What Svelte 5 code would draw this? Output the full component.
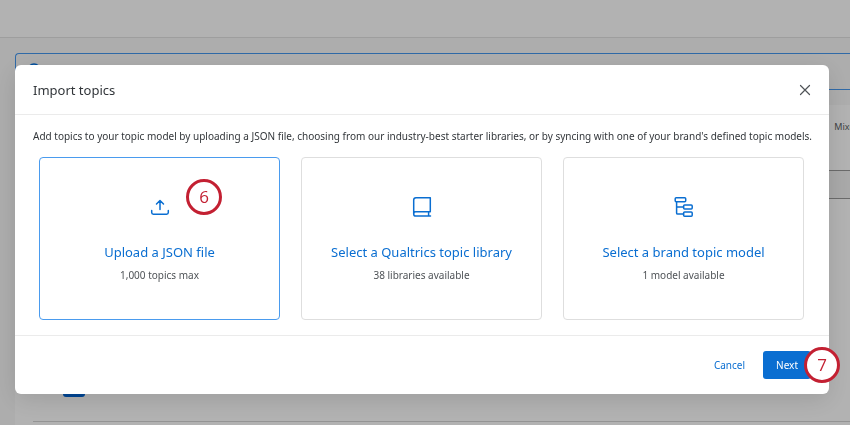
<script>
  let selected = $state("json");
  let open = $state(true);

  const options = [
    { id: "json", title: "Upload a JSON file", note: "1,000 topics max", step: 6 },
    { id: "library", title: "Select a Qualtrics topic library", note: "38 libraries available" },
    { id: "brand", title: "Select a brand topic model", note: "1 model available" },
  ];

  function close() {
    open = false;
  }
</script>

<div class="page">
  <div class="topbar"></div>
  <main class="content">
    <div class="notice">
      <svg width="14" height="14" viewBox="0 0 14 14" aria-hidden="true">
        <circle cx="7" cy="7" r="6" />
      </svg>
    </div>
    <div class="panel">
      <div class="summary">
        <span class="square"></span>
        <span>Mixed</span>
      </div>
      <div class="strip"></div>
      <div class="rows">
        <span class="chip"></span>
      </div>
    </div>
  </main>
</div>

{#if open}
  <div class="overlay">
    <div class="modal" role="dialog" aria-modal="true" aria-labelledby="modal-title">
      <header>
        <h1 id="modal-title">Import topics</h1>
        <button class="close" aria-label="Close" onclick={close}>
          <svg width="12" height="12" viewBox="0 0 12 12">
            <path d="M1.5 1.5l9 9M10.5 1.5l-9 9" />
          </svg>
        </button>
      </header>

      <div class="body">
        <p>Add topics to your topic model by uploading a JSON file, choosing from our industry-best starter libraries, or by syncing with one of your brand's defined topic models.</p>
        <div class="cards">
          {#each options as option}
            <button
              class="card"
              class:selected={selected === option.id}
              aria-pressed={selected === option.id}
              onclick={() => { selected = option.id }}
            >
              <svg class="icon" width="22" height="22" viewBox="0 0 22 22" aria-hidden="true">
                {#if option.id === "json"}
                  <path d="M11 13.5V4.5M7.5 8L11 4.5L14.5 8M2.7 14.5V16.5Q2.7 18.2 4.4 18.2H17.6Q19.3 18.2 19.3 16.5V14.5" />
                {:else if option.id === "library"}
                  <path d="M19.3 15.8V1.7H5Q2.7 1.7 2.7 4V18Q2.7 20.1 4.8 20.1H19.5M19.3 15.8H4.8Q2.7 15.8 2.7 18M17.6 15.8V20" />
                {:else}
                  <rect x="2.2" y="1.7" width="10.5" height="4" rx="1" />
                  <rect x="10.6" y="9" width="8.6" height="4" rx="1" />
                  <rect x="10.6" y="16" width="8.6" height="4.2" rx="1" />
                  <path d="M3.6 5.7V17Q3.6 18.1 4.7 18.1H10.6M3.6 11H10.6" />
                {/if}
              </svg>
              <span class="title">{option.title}</span>
              <span class="note">{option.note}</span>
              {#if option.step}
                <span class="step on-card">{option.step}</span>
              {/if}
            </button>
          {/each}
        </div>
      </div>

      <footer>
        <button class="cancel" onclick={close}>Cancel</button>
        <button class="next">Next</button>
        <span class="step on-footer">7</span>
      </footer>
    </div>
  </div>
{/if}

<style>
  :global(body) {
    background: #f8f8f8;
    color: #32363a;
    font-family: "Noto Sans", "Liberation Sans", sans-serif;
    font-size: 10px;
    line-height: 16px;
  }

  button {
    padding: 0;
    border: 0;
    background: none;
    color: inherit;
    font: inherit;
    cursor: pointer;
  }

  svg {
    fill: none;
    stroke: currentColor;
    stroke-width: 1.5;
    stroke-linecap: round;
    stroke-linejoin: round;
  }

  .page {
    height: 100vh;
    overflow: hidden;
    display: flex;
    flex-direction: column;
  }

  .topbar {
    flex: none;
    height: 37px;
    background: #fff;
    border-bottom: 1px solid #e2e2e2;
  }

  .content {
    flex: 1;
    display: flex;
    flex-direction: column;
    padding: 15px 0 0 15px;
  }

  .notice {
    flex: none;
    box-sizing: border-box;
    height: 37px;
    padding: 9px 11px;
    border: 1px solid #4598f0;
    border-right: 0;
    border-radius: 4px 0 0 4px;
    color: #0070e0;
  }

  .panel {
    flex: 1;
    margin-top: 15px;
    background: #fff;
  }

  .summary {
    display: flex;
    align-items: center;
    justify-content: flex-end;
    gap: 5px;
    height: 36px;
    margin-right: -10px;
    padding: 4px 0 25px;
    color: #5a5e62;
    font-size: 9px;
  }

  .square {
    width: 5px;
    height: 6px;
    background: #666;
  }

  .strip {
    height: 27px;
    background: #f2f2f2;
    border-top: 1px solid #999;
    border-bottom: 1px solid #999;
  }

  .rows {
    display: flex;
    align-items: flex-end;
    height: 223px;
    margin-left: 18px;
    padding-left: 30px;
    box-sizing: border-box;
    border-bottom: 1px solid #d4d4d4;
  }

  .chip {
    width: 22px;
    height: 16px;
    margin-bottom: 24px;
    border-radius: 3px;
    background: #0064d2;
  }

  .overlay {
    position: fixed;
    inset: 0;
    display: flex;
    align-items: flex-start;
    padding: 65px 21px 0 15px;
    background: rgba(0, 0, 0, 0.3);
  }

  .modal {
    flex: 1;
    min-width: 0;
    border-radius: 6px;
    background: #fff;
    box-shadow: 0 6px 24px rgba(0, 0, 0, 0.12);
  }

  header {
    display: flex;
    align-items: center;
    justify-content: space-between;
    height: 49px;
    padding: 0 18px;
    border-bottom: 1px solid #ebebeb;
  }

  h1 {
    margin: 0;
    font-size: 13px;
    font-weight: 400;
  }

  .close {
    display: flex;
    color: #4f5357;
  }

  .close svg {
    stroke-width: 1.2;
  }

  .body {
    padding: 13px 18px 15px;
  }

  p {
    margin: 0 0 13px;
    white-space: nowrap;
  }

  .cards {
    display: grid;
    grid-template-columns: repeat(3, 1fr);
    gap: 21px;
    padding: 0 7px 0 6px;
  }

  .card {
    position: relative;
    display: flex;
    flex-direction: column;
    align-items: center;
    height: 163px;
    padding-top: 38px;
    border: 1px solid #dedede;
    border-radius: 4px;
  }

  .card.selected {
    border-color: #4a9bee;
  }

  .icon {
    color: #0a6ed1;
  }

  .title {
    margin-top: 24px;
    color: #0a6ed1;
    font-size: 13px;
    line-height: 20px;
  }

  .note {
    margin-top: 5px;
    color: #4f5357;
  }

  footer {
    position: relative;
    display: flex;
    align-items: center;
    justify-content: flex-end;
    gap: 18px;
    height: 58px;
    padding-right: 18px;
    border-top: 1px solid #ebebeb;
  }

  .cancel {
    color: #0a6ed1;
  }

  .next {
    height: 28px;
    padding: 0 13px;
    border-radius: 3px;
    background: #0a6ed1;
    color: #fff;
  }

  .step {
    position: absolute;
    box-sizing: border-box;
    width: 36px;
    height: 36px;
    border: 3px solid #c32032;
    border-radius: 50%;
    background: #fff;
    color: #c32032;
    font-family: "Open Sans", sans-serif;
    font-size: 17px;
    line-height: 30px;
    text-align: center;
  }

  .on-card {
    top: 21px;
    left: 146px;
  }

  .on-footer {
    top: 11px;
    right: -11px;
  }
</style>
